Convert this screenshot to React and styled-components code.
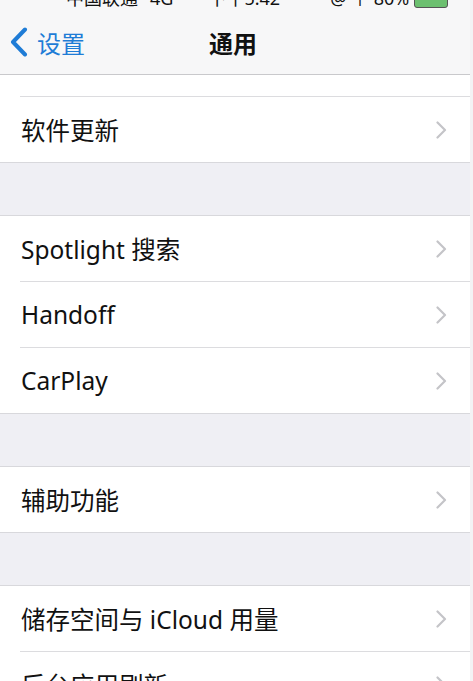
import React from "react";
import styled, { createGlobalStyle } from "styled-components";

const Global = createGlobalStyle`
  html, body { margin: 0; padding: 0; background: #f0f0f2; }
  body { font-family: "Noto Sans", "Noto Sans CJK SC", sans-serif; }
`;

const Screen = styled.div`
  width: 470px;
  height: 681px;
  overflow: hidden;
  background: #efeff4;
  border-right: 3px solid #f3f3f5;
  display: flex;
  flex-direction: column;
`;

const Header = styled.div`
  background: #f7f7f8;
  border-bottom: 1px solid #c9c9cc;
  display: flex;
  flex-direction: column;
  flex-shrink: 0;
`;

const StatusBar = styled.div`
  height: 10px;
  overflow: hidden;
  display: flex;
  align-items: flex-end;
  font-size: 18px;
  line-height: 1;
  color: #111;
`;

const StatusText = styled.span`
  display: block;
  margin-bottom: 3px;
  white-space: nowrap;
  flex-shrink: 0;
  margin-left: ${(p) => p.$ml || 0}px;
`;

const Battery = styled.span`
  display: block;
  flex-shrink: 0;
  width: 34px;
  height: 13px;
  margin-bottom: 2px;
  margin-left: 5px;
  border: 1.5px solid #555;
  border-radius: 3px;
  background: #6cc070;
  box-sizing: border-box;
`;

const NavBar = styled.div`
  height: 64px;
  display: grid;
  grid-template-columns: 1fr auto 1fr;
  align-items: center;
`;

const Back = styled.div`
  display: flex;
  align-items: center;
  gap: 9px;
  padding-left: 10px;
  color: #1f7cd6;
  font-size: 24px;
  font-family: "Noto Sans CJK SC", sans-serif;
`;

const Title = styled.div`
  font-size: 24px;
  font-weight: 700;
  color: #111;
  font-family: "Noto Sans CJK SC", sans-serif;
  transform: translateX(-2px);
`;

const Group = styled.div`
  background: #fff;
  border-top: ${(p) => (p.$noTop ? "none" : "1px solid #d8d8dc")};
  border-bottom: ${(p) => (p.$noBottom ? "none" : "1px solid #d8d8dc")};
  margin-top: ${(p) => (p.$gap ? "52px" : "0")};
  flex-shrink: 0;
`;

const Row = styled.div`
  height: ${(p) => p.$h || 65}px;
  display: flex;
  align-items: center;
  padding-left: 21px;
  padding-right: 23px;
  color: #111;
  font-size: 24.5px;
  position: relative;
  &:not(:last-child)::after {
    content: "";
    position: absolute;
    left: 20px;
    right: 0;
    bottom: -1px;
    height: 1px;
    background: #dcdcdf;
  }
  &:not(:last-child) {
    margin-bottom: 1px;
  }
`;

const Label = styled.span`
  flex: 1;
  white-space: nowrap;
`;

const Chevron = () => (
  <svg width="11" height="18" viewBox="0 0 11 18">
    <path d="M1.5 1.5 L9 9 L1.5 16.5" fill="none" stroke="#c4c4c8" strokeWidth="2.2" strokeLinecap="round" strokeLinejoin="round" />
  </svg>
);

const BackChevron = () => (
  <svg width="18" height="30" viewBox="0 0 18 30">
    <path d="M15 2.5 L3 15 L15 27.5" fill="none" stroke="#1f7cd6" strokeWidth="4" strokeLinecap="round" strokeLinejoin="round" />
  </svg>
);

const Item = ({ label, h }) => (
  <Row $h={h}>
    <Label>{label}</Label>
    {label ? <Chevron /> : null}
  </Row>
);

export default function App() {
  return (
    <>
      <Global />
      <Screen>
        <Header>
          <StatusBar>
            <StatusText $ml={66}>中国联通</StatusText>
            <StatusText $ml={12}>4G</StatusText>
            <StatusText $ml={35}>下午5:42</StatusText>
            <StatusText $ml={50}>@ ↑ 80%</StatusText>
            <Battery />
          </StatusBar>
          <NavBar>
            <Back>
              <BackChevron />
              <span>设置</span>
            </Back>
            <Title>通用</Title>
            <div />
          </NavBar>
        </Header>
        <Group $noTop>
          <Item h={21} />
          <Item label="软件更新" />
        </Group>
        <Group $gap>
          <Item label="Spotlight 搜索" />
          <Item label="Handoff" />
          <Item label="CarPlay" />
        </Group>
        <Group $gap>
          <Item label="辅助功能" />
        </Group>
        <Group $gap $noBottom>
          <Item label="储存空间与 iCloud 用量" />
          <Item label="后台应用刷新" />
        </Group>
      </Screen>
    </>
  );
}
